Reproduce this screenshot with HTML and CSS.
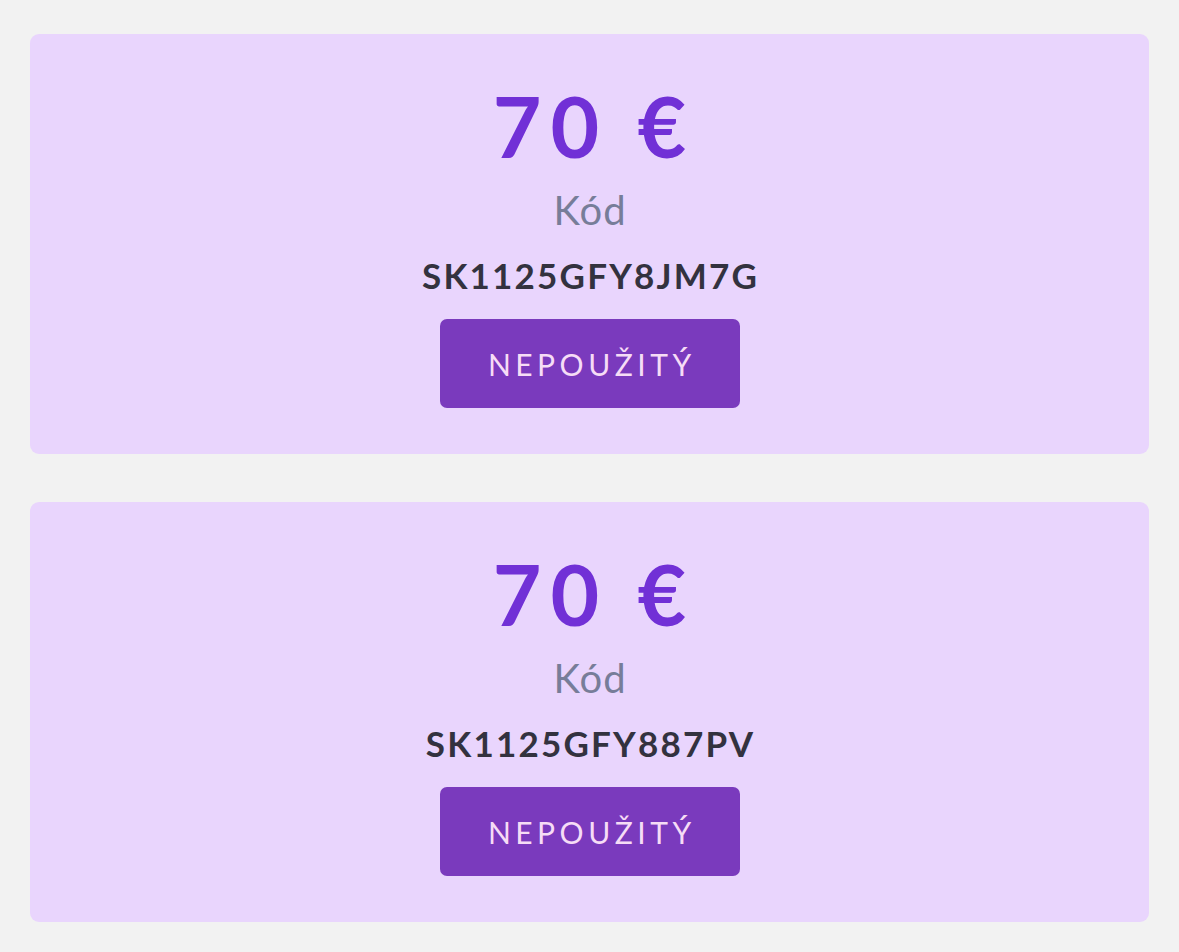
FILE: index.html
```html
<!DOCTYPE html>
<html lang="sk">
<head>
<meta charset="utf-8">
<link rel="stylesheet" href="styles.css">
</head>
<body>
<main class="list">
  <section class="card">
    <div class="amount">70 €</div>
    <div class="label">Kód</div>
    <div class="code">SK1125GFY8JM7G</div>
    <div class="status">NEPOUŽITÝ</div>
  </section>
  <section class="card">
    <div class="amount">70 €</div>
    <div class="label">Kód</div>
    <div class="code">SK1125GFY887PV</div>
    <div class="status">NEPOUŽITÝ</div>
  </section>
</main>
</body>
</html>
```
FILE: styles.css
```css
html, body {
  margin: 0;
  padding: 0;
  background: #f2f2f2;
  font-family: Lato, "Noto Sans", sans-serif;
}
.list {
  display: flex;
  flex-direction: column;
  gap: 48px;
  padding: 34px 30px 30px 30px;
}
.card {
  background: #e9d5fd;
  border-radius: 9px;
  display: flex;
  flex-direction: column;
  align-items: center;
  padding: 44px 20px 45px;
  height: 420px;
  box-sizing: border-box;
}
.amount {
  color: #7130d6;
  font-size: 84px;
  font-weight: 700;
  letter-spacing: 9px;
  padding-left: 9px;
  line-height: 96px;
}
.label {
  color: #777d99;
  font-size: 40px;
  letter-spacing: 1px;
  padding-left: 1px;
  line-height: 46px;
  margin-top: 13px;
}
.code {
  color: #33323f;
  font-size: 35px;
  font-weight: 700;
  letter-spacing: 2.2px;
  padding-left: 2.2px;
  line-height: 46px;
  margin-top: 19px;
}
.status {
  margin-top: 21px;
  width: 300px;
  height: 89px;
  box-sizing: border-box;
  background: #7a3abd;
  border-radius: 7px;
  color: #f6dcf6;
  font-size: 30px;
  letter-spacing: 4.5px;
  padding-left: 4.5px;
  display: flex;
  align-items: center;
  justify-content: center;
}
```
